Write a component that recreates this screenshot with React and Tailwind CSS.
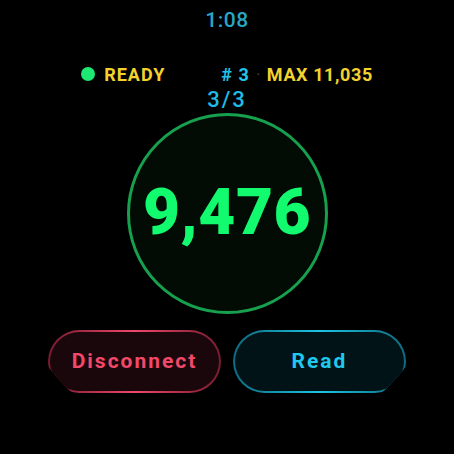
export default function App() {
  return (
    <div className="w-[454px] h-[454px] bg-black" style={{ fontFamily: "Roboto, 'Liberation Sans', sans-serif" }}>
      <div className="w-[454px] h-[454px] rounded-full overflow-hidden bg-black flex flex-col items-center">
        <div className="mt-[8px] text-[21px] leading-[24px] font-medium text-[#29a6c6] tracking-wide">1:08</div>

        <div className="mt-[32px] h-[20px] flex items-center gap-[56px]">
          <div className="flex items-center gap-[9px]">
            <span className="w-[14px] h-[14px] rounded-full bg-[#1ee874]" />
            <span className="text-[18px] font-bold text-[#f3d22e] tracking-[1px]">READY</span>
          </div>
          <div className="flex items-center text-[18px] font-bold">
            <span className="text-[#1fc3ec] tracking-[1px]"># 3</span>
            <span className="mx-[7px] text-[#4a4a3a] text-[10px]">·</span>
            <span className="text-[#f3d22e] tracking-[0.6px]">MAX 11,035</span>
          </div>
        </div>

        <div className="mt-[4px] text-[22px] leading-[24px] font-medium text-[#1fbce6] tracking-[2px]">3/3</div>

        <div className="mt-[1px] w-[201px] h-[201px] rounded-full border-[3px] border-[#17a04d] bg-[#020c05] flex items-center justify-center">
          <span className="text-[64px] font-black leading-none text-[#12fb6e] tracking-[0.5px] pb-[2px]">9,476</span>
        </div>

        <div className="mt-[16px] flex gap-[12px]">
          <div className="w-[173px] h-[63px] rounded-full p-[2px] bg-gradient-to-r from-[#7a1b30] via-[#f0486a] to-[#7a1b30]">
            <div className="w-full h-full rounded-full bg-[#19070b] flex items-center justify-center">
              <span className="text-[21px] font-bold text-[#f2496a] tracking-[2px]">Disconnect</span>
            </div>
          </div>
          <div className="w-[173px] h-[63px] rounded-full p-[2px] bg-gradient-to-r from-[#0e6b80] via-[#1ec4e4] to-[#0e6b80]">
            <div className="w-full h-full rounded-full bg-[#021317] flex items-center justify-center">
              <span className="text-[21px] font-bold text-[#1ec8ee] tracking-[2px]">Read</span>
            </div>
          </div>
        </div>
      </div>
    </div>
  );
}
